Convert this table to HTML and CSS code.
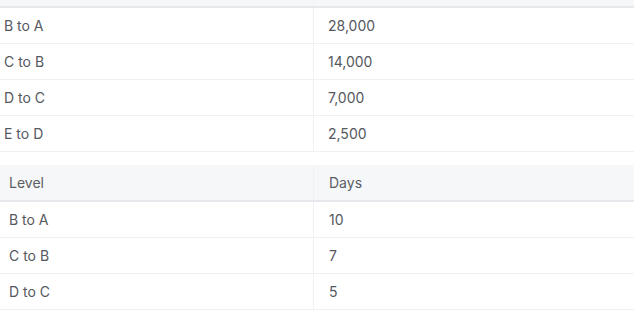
FILE: index.html
```html
<!DOCTYPE html>
<html>
<head>
<meta charset="utf-8">
<link rel="stylesheet" href="styles.css">
</head>
<body>
<div class="page">
  <div class="table table-top">
    <div class="head head-stub"><div class="cell c1"></div><div class="cell c2"></div></div>
    <div class="row"><div class="cell c1">B to A</div><div class="cell c2">28,000</div></div>
    <div class="row"><div class="cell c1">C to B</div><div class="cell c2">14,000</div></div>
    <div class="row"><div class="cell c1">D to C</div><div class="cell c2">7,000</div></div>
    <div class="row"><div class="cell c1">E to D</div><div class="cell c2">2,500</div></div>
  </div>
  <div class="table table-bottom">
    <div class="head"><div class="cell c1">Level</div><div class="cell c2">Days</div></div>
    <div class="row"><div class="cell c1">B to A</div><div class="cell c2">10</div></div>
    <div class="row"><div class="cell c1">C to B</div><div class="cell c2">7</div></div>
    <div class="row"><div class="cell c1">D to C</div><div class="cell c2">5</div></div>
  </div>
</div>
</body>
</html>
```
FILE: styles.css
```css
html, body {
  margin: 0;
  padding: 0;
  background: #ffffff;
}
.page {
  width: 634px;
  font-family: Inter, "Noto Sans", sans-serif;
  font-size: 14px;
  color: #55585e;
}
.table {
  display: flex;
  flex-direction: column;
}
.table-bottom {
  margin-top: 13px;
}
.head, .row {
  display: grid;
  grid-template-columns: 314px 1fr;
}
.head {
  background: #f6f7f9;
  border-bottom: 2px solid #e6e8ec;
  height: 35px;
}
.head-stub {
  height: 5px;
}
.row {
  height: 35px;
  border-bottom: 1px solid #eef0f2;
}
.cell {
  display: flex;
  align-items: center;
}
.c1 {
  border-right: 1px solid #f0f1f3;
}
.table-top .c1 { padding-left: 4px; }
.table-top .c2 { padding-left: 14px; }
.table-bottom .c1 { padding-left: 9px; }
.table-bottom .c2 { padding-left: 15px; }
.head .cell { color: #5a5d63; }
.head-stub { box-sizing: content-box; padding-top: 0; min-height: 6px; height: 6px; }
```
